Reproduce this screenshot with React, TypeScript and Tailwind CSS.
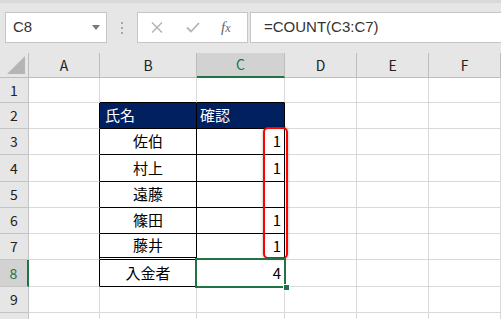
import React from 'react';

const cols = [
  { key: 'A', w: 'w-[71px]' },
  { key: 'B', w: 'w-[97px]' },
  { key: 'C', w: 'w-[88px]' },
  { key: 'D', w: 'w-[72px]' },
  { key: 'E', w: 'w-[72px]' },
  { key: 'F', w: 'w-[72px]' },
];

const rowHeights = ['h-[25px]', 'h-[26px]', 'h-[26px]', 'h-[27px]', 'h-[26px]', 'h-[26px]', 'h-[26px]', 'h-[27px]', 'h-[26px]', 'h-[26px]'];

const names: Record<number, string> = { 3: '佐伯', 4: '村上', 5: '遠藤', 6: '篠田', 7: '藤井', 8: '入金者' };
const checks: Record<number, string> = { 3: '1', 4: '1', 6: '1', 7: '1', 8: '4' };

const Toolbar = () => (
  <div className="h-[53px] bg-[#e6e6e6] border-t-[3px] border-t-[#d9d9d9] flex items-start pt-[9px] pl-[5px]">
    <div className="w-[102px] h-[31px] bg-white border border-[#c6c6c6] flex items-center justify-between pl-[7px] pr-[6px]">
      <span className="text-[15px] text-[#333] font-['Liberation_Sans',sans-serif]">C8</span>
      <svg width="8" height="5" viewBox="0 0 8 5">
        <path d="M0 0 H8 L4 5 Z" fill="#7a7a7a" />
      </svg>
    </div>
    <div className="w-[30px] h-[31px] flex flex-col items-center justify-center gap-[3px]">
      <span className="w-[2px] h-[2px] bg-[#a8a8a8]" />
      <span className="w-[2px] h-[2px] bg-[#a8a8a8]" />
      <span className="w-[2px] h-[2px] bg-[#a8a8a8]" />
    </div>
    <div className="w-[111px] h-[31px] bg-white border border-[#c6c6c6] flex items-center pl-[13px]">
      <svg width="12" height="11" viewBox="0 0 12 11" className="mr-[23px]">
        <path d="M1 0.5 L11 10.5 M11 0.5 L1 10.5" stroke="#b5b5b5" strokeWidth="1.5" fill="none" />
      </svg>
      <svg width="14" height="11" viewBox="0 0 14 11" className="mr-[21px]">
        <path d="M1 5.5 L5 9.5 L13 1" stroke="#b5b5b5" strokeWidth="1.8" fill="none" />
      </svg>
      <span className="text-[15px] italic text-[#666] font-['Liberation_Serif',serif] leading-none">
        f<span className="text-[12px]">x</span>
      </span>
    </div>
    <div className="ml-[2px] flex-1 h-[31px] bg-white border border-r-0 border-[#c6c6c6] flex items-center pl-[13px]">
      <span className="text-[15px] text-[#333] font-['Liberation_Sans',sans-serif]">=COUNT(C3:C7)</span>
    </div>
  </div>
);

const HeaderRow = () => (
  <div className="flex h-[25px] bg-[#e6e6e6]">
    <div className="w-[29px] h-full border-r border-b border-[#bdbdbd] flex items-end justify-end pr-[3px] pb-[3px]">
      <svg width="18" height="18" viewBox="0 0 18 18">
        <path d="M18 0 V18 H0 Z" fill="#b5b5b5" />
      </svg>
    </div>
    {cols.map((c) =>
      c.key === 'C' ? (
        <div
          key={c.key}
          className={`${c.w} h-full bg-[#d2d2d2] border-r border-[#bdbdbd] border-b-2 border-b-[#217346] flex items-center justify-center text-[14px] text-[#217346]`}
        >
          {c.key}
        </div>
      ) : (
        <div
          key={c.key}
          className={`${c.w} h-full border-r border-b border-[#bdbdbd] flex items-center justify-center text-[14px] text-[#222]`}
        >
          {c.key}
        </div>
      )
    )}
  </div>
);

const Cell = ({ r, ci }: { r: number; ci: number }) => {
  const inTable = r >= 2 && r <= 8;
  const rightBlack = inTable && ci <= 2;
  const bottomBlack = (ci === 1 || ci === 2) && r >= 1 && r <= 8;
  const doubleBottom = ci === 1 && r === 7;

  let border = 'border-r border-b';
  border += rightBlack ? ' border-r-black' : ' border-r-[#d9d9d9]';
  if (doubleBottom) border += ' border-b-[3px] border-double border-b-black';
  else border += bottomBlack ? ' border-b-black' : ' border-b-[#d9d9d9]';

  let content: React.ReactNode = null;
  let extra = '';
  if (r === 2 && ci === 1) {
    content = '氏名';
    extra = 'bg-[#002060] text-white justify-start pl-[5px]';
  } else if (r === 2 && ci === 2) {
    content = '確認';
    extra = 'bg-[#002060] text-white justify-start pl-[3px]';
  } else if (ci === 1 && names[r]) {
    content = names[r];
    extra = 'justify-center';
  } else if (ci === 2 && checks[r]) {
    content = checks[r];
    extra = 'justify-end pr-[3px]';
  }

  return (
    <div className={`${cols[ci].w} h-full ${border} flex items-center text-[15px] text-black ${extra}`}>
      {content}
    </div>
  );
};

const GridRow = ({ r }: { r: number }) => (
  <div className={`flex ${rowHeights[r - 1]}`}>
    {r === 8 ? (
      <div className="w-[29px] h-full bg-[#d2d2d2] border-r-2 border-r-[#217346] border-b border-b-[#c4c4c4] flex items-center justify-center text-[14px] text-[#217346]">
        {r}
      </div>
    ) : (
      <div className="w-[29px] h-full bg-[#e6e6e6] border-r border-b border-[#c4c4c4] flex items-center justify-center text-[14px] text-[#222]">
        {r}
      </div>
    )}
    {cols.map((c, ci) => (
      <Cell key={c.key} r={r} ci={ci} />
    ))}
  </div>
);

export default function App() {
  return (
    <div className="w-[501px] h-[319px] overflow-hidden bg-white font-['Noto_Sans_CJK_JP','Noto_Sans',sans-serif]">
      <Toolbar />
      <div className="relative">
        <HeaderRow />
        {[1, 2, 3, 4, 5, 6, 7, 8, 9, 10].map((r) => (
          <GridRow key={r} r={r} />
        ))}
        {/* red highlight over C3:C7 */}
        <div className="absolute left-[263px] top-[74px] w-[25px] h-[132px] border-2 border-[#ff0000] rounded-[5px] shadow-[0_0_3px_rgba(0,0,0,0.35)]" />
        {/* active cell C8 */}
        <div className="absolute left-[195px] top-[205px] w-[91px] h-[30px] border-2 border-[#217346]" />
        <div className="absolute left-[283px] top-[231px] w-[7px] h-[7px] bg-[#217346] border border-white" />
      </div>
    </div>
  );
}
